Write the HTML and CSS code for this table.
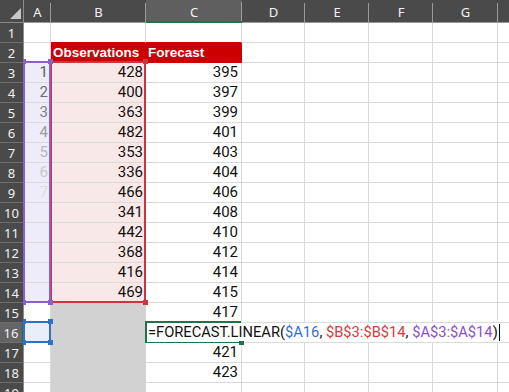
FILE: index.html
```html
<!DOCTYPE html>
<html>
<head>
<meta charset="utf-8">
<link rel="stylesheet" href="styles.css">
</head>
<body>
<div class="sheet">
  <div class="corner"><span class="tri"></span></div>
  <div class="ch">A</div><div class="ch">B</div><div class="ch ch-sel">C</div><div class="ch">D</div><div class="ch">E</div><div class="ch">F</div><div class="ch">G</div><div class="ch"></div>

  <div class="rh">1</div><div class="c"></div><div class="c above-red"></div><div class="c above-red"></div><div class="c"></div><div class="c"></div><div class="c"></div><div class="c"></div><div class="c"></div>

  <div class="rh">2</div><div class="c"></div><div class="c hdr">Observations</div><div class="c hdr">Forecast</div><div class="c"></div><div class="c"></div><div class="c"></div><div class="c"></div><div class="c"></div>

  <div class="rh">3</div><div class="c num ra f1">1</div><div class="c num rb">428</div><div class="c num cc">395</div><div class="c"></div><div class="c"></div><div class="c"></div><div class="c"></div><div class="c"></div>
  <div class="rh">4</div><div class="c num ra f2">2</div><div class="c num rb">400</div><div class="c num cc">397</div><div class="c"></div><div class="c"></div><div class="c"></div><div class="c"></div><div class="c"></div>
  <div class="rh">5</div><div class="c num ra f3">3</div><div class="c num rb">363</div><div class="c num cc">399</div><div class="c"></div><div class="c"></div><div class="c"></div><div class="c"></div><div class="c"></div>
  <div class="rh">6</div><div class="c num ra f4">4</div><div class="c num rb">482</div><div class="c num cc">401</div><div class="c"></div><div class="c"></div><div class="c"></div><div class="c"></div><div class="c"></div>
  <div class="rh">7</div><div class="c num ra f5">5</div><div class="c num rb">353</div><div class="c num cc">403</div><div class="c"></div><div class="c"></div><div class="c"></div><div class="c"></div><div class="c"></div>
  <div class="rh">8</div><div class="c num ra f6">6</div><div class="c num rb">336</div><div class="c num cc">404</div><div class="c"></div><div class="c"></div><div class="c"></div><div class="c"></div><div class="c"></div>
  <div class="rh">9</div><div class="c num ra f7">7</div><div class="c num rb">466</div><div class="c num cc">406</div><div class="c"></div><div class="c"></div><div class="c"></div><div class="c"></div><div class="c"></div>
  <div class="rh">10</div><div class="c num ra"></div><div class="c num rb">341</div><div class="c num cc">408</div><div class="c"></div><div class="c"></div><div class="c"></div><div class="c"></div><div class="c"></div>
  <div class="rh">11</div><div class="c num ra"></div><div class="c num rb">442</div><div class="c num cc">410</div><div class="c"></div><div class="c"></div><div class="c"></div><div class="c"></div><div class="c"></div>
  <div class="rh">12</div><div class="c num ra"></div><div class="c num rb">368</div><div class="c num cc">412</div><div class="c"></div><div class="c"></div><div class="c"></div><div class="c"></div><div class="c"></div>
  <div class="rh">13</div><div class="c num ra"></div><div class="c num rb">416</div><div class="c num cc">414</div><div class="c"></div><div class="c"></div><div class="c"></div><div class="c"></div><div class="c"></div>
  <div class="rh">14</div><div class="c num ra"></div><div class="c num rb">469</div><div class="c num cc">415</div><div class="c"></div><div class="c"></div><div class="c"></div><div class="c"></div><div class="c"></div>

  <div class="rh">15</div><div class="c"></div><div class="c gray"></div><div class="c num cc">417</div><div class="c"></div><div class="c"></div><div class="c"></div><div class="c"></div><div class="c"></div>
  <div class="rh rh-sel">16</div><div class="c a-sel"></div><div class="c gray"></div><div class="c"></div><div class="c"></div><div class="c"></div><div class="c"></div><div class="c"></div><div class="c"></div>
  <div class="rh">17</div><div class="c"></div><div class="c gray"></div><div class="c num cc">421</div><div class="c"></div><div class="c"></div><div class="c"></div><div class="c"></div><div class="c"></div>
  <div class="rh">18</div><div class="c"></div><div class="c gray"></div><div class="c num cc">423</div><div class="c"></div><div class="c"></div><div class="c"></div><div class="c"></div><div class="c"></div>
  <div class="rh">19</div><div class="c"></div><div class="c gray"></div><div class="c"></div><div class="c"></div><div class="c"></div><div class="c"></div><div class="c"></div><div class="c"></div>

  <!-- range highlights (overlays) -->
  <div class="rng rng-red"></div>
  <div class="rng rng-purple"></div>
  <div class="rng rng-blue"></div>

  <div class="hd hd-red hd-r1"></div>
  <div class="hd hd-red hd-r2"></div>
  <div class="hd hd-purple hd-p1"></div>
  <div class="hd hd-purple hd-p2"></div>
  <div class="hd hd-purple hd-p3"></div>
  <div class="hd hd-purple hd-p4"></div>
  <div class="hd hd-blue hd-b1"></div>
  <div class="hd hd-blue hd-b2"></div>
  <div class="hd hd-blue hd-b3"></div>
  <div class="hd hd-blue hd-b4"></div>

  <div class="editor"><span class="ftext">=FORECAST.LINEAR(<span class="ref-blue">$A16</span>, <span class="ref-red">$B$3:$B$14</span>, <span class="ref-purple">$A$3:$A$14</span>)<span class="caret"></span></span></div>
  <div class="hd hd-green"></div>
</div>
</body>
</html>
```

FILE: styles.css
```css
html, body {
  margin: 0;
  padding: 0;
  background: #ffffff;
}

.sheet {
  position: relative;
  width: 509px;
  height: 392px;
  overflow: hidden;
  display: grid;
  grid-template-columns: 24px 27px 95px 96px 63px 64px 64px 65px 64px;
  grid-template-rows: 23px repeat(19, 20px);
  font-family: Roboto, "Liberation Sans", sans-serif;
}

.corner {
  background: #4a4a4a;
  border-right: 1px solid #8c8c8c;
  border-bottom: 1px solid #8c8c8c;
  box-sizing: border-box;
  display: flex;
  justify-content: flex-end;
  align-items: flex-end;
  padding: 0 2px 3px 0;
}

.tri {
  width: 0;
  height: 0;
  border-left: 11px solid transparent;
  border-bottom: 11px solid #c8c8c8;
}

.ch {
  background-color: #4a4a4a;
  background-image: linear-gradient(#9a9a9a, #9a9a9a);
  background-repeat: no-repeat;
  background-position: right bottom;
  background-size: 1px 19px;
  border-bottom: 1px solid #9a9a9a;
  box-sizing: border-box;
  color: #f2f2f2;
  font-family: "Noto Sans", "Open Sans", sans-serif;
  font-size: 13px;
  text-align: center;
  line-height: 22px;
  padding-top: 1px;
}

.ch-sel {
  background-color: #5f5f5f;
  border-bottom: 2px solid #217346;
}

.rh {
  background: #4a4a4a;
  border-right: 1px solid #8c8c8c;
  border-bottom: 1px solid #6e6e6e;
  box-sizing: border-box;
  color: #f2f2f2;
  font-family: "Noto Sans", "Open Sans", sans-serif;
  font-size: 13px;
  text-align: center;
  line-height: 19px;
  padding-top: 1px;
}

.rh-sel {
  background: #646464;
  border-right: 2px solid #217346;
}

.c {
  border-right: 1px solid #dadada;
  border-bottom: 1px solid #dadada;
  box-sizing: border-box;
  font-size: 15px;
  line-height: 19px;
  color: #111;
  padding: 0 2px;
  white-space: nowrap;
  overflow: hidden;
}

.num { text-align: right; }
.cc { padding-right: 3px; }

.above-red { border-bottom-color: #cc0000; }

.hdr {
  background: #cc0000;
  border-color: #cc0000;
  color: #ffffff;
  font-family: "Liberation Sans", Arial, sans-serif;
  font-weight: bold;
  font-size: 13.5px;
  line-height: 20px;
  padding-left: 2px;
}

.ra { background: #eeecf8; }
.rb { background: #f9e8e8; }
.gray { background: #d2d2d2; border-color: #d2d2d2; }
.a-sel { background: #e9eef9; }

.f1 { color: #5c5c5c; }
.f2 { color: #6e6e6e; }
.f3 { color: #808080; }
.f4 { color: #9a9a9a; }
.f5 { color: #b6b6b6; }
.f6 { color: #cacaca; }
.f7 { color: #dcdcdc; }

/* range highlight frames drawn over the grid */
.rng {
  position: absolute;
  box-sizing: border-box;
  border: 2px solid;
}
.rng-red {
  left: 50px; top: 61px; width: 96px; height: 242px;
  border-color: #c8373f;
}
.rng-purple {
  left: 23px; top: 61px; width: 28px; height: 242px;
  border-color: #8b5fc8;
}
.rng-blue {
  left: 23px; top: 321px; width: 28px; height: 22px;
  border-color: #2f6fce;
}

.hd {
  position: absolute;
  width: 5px;
  height: 5px;
}
.hd-red { background: #c8373f; }
.hd-purple { background: #8b5fc8; }
.hd-blue { background: #2f6fce; }
.hd-r1 { left: 143px; top: 59px; }
.hd-r2 { left: 143px; top: 300px; }
.hd-p1 { left: 48px; top: 59px; }
.hd-p2 { left: 48px; top: 300px; }
.hd-p3 { left: 23px; top: 59px; width: 3px; }
.hd-p4 { left: 23px; top: 300px; width: 3px; }
.hd-b1 { left: 48px; top: 319px; }
.hd-b2 { left: 48px; top: 340px; }
.hd-b3 { left: 23px; top: 319px; width: 3px; }
.hd-b4 { left: 23px; top: 340px; width: 3px; }

.hd-green {
  background: #217346;
  left: 239px; top: 341px;
  width: 5px; height: 4px;
}

/* in-cell formula editor */
.editor {
  position: absolute;
  left: 145px;
  top: 321px;
  width: 96px;
  height: 22px;
  box-sizing: border-box;
  border: 2px solid #217346;
  border-right: none;
  overflow: visible;
  white-space: nowrap;
}

.ftext {
  display: inline-block;
  vertical-align: top;
  height: 19px;
  line-height: 19px;
  background: #ffffff;
  font-size: 14.7px;
  color: #111;
  padding-left: 1px;
  padding-right: 2px;
}

.ref-blue { color: #2f6fd6; }
.ref-red { color: #d93b3b; }
.ref-purple { color: #8a4fd0; }

.caret {
  display: inline-block;
  vertical-align: top;
  width: 1px;
  height: 17px;
  margin-top: 1px;
  background: #000;
  margin-left: 1px;
}
```
